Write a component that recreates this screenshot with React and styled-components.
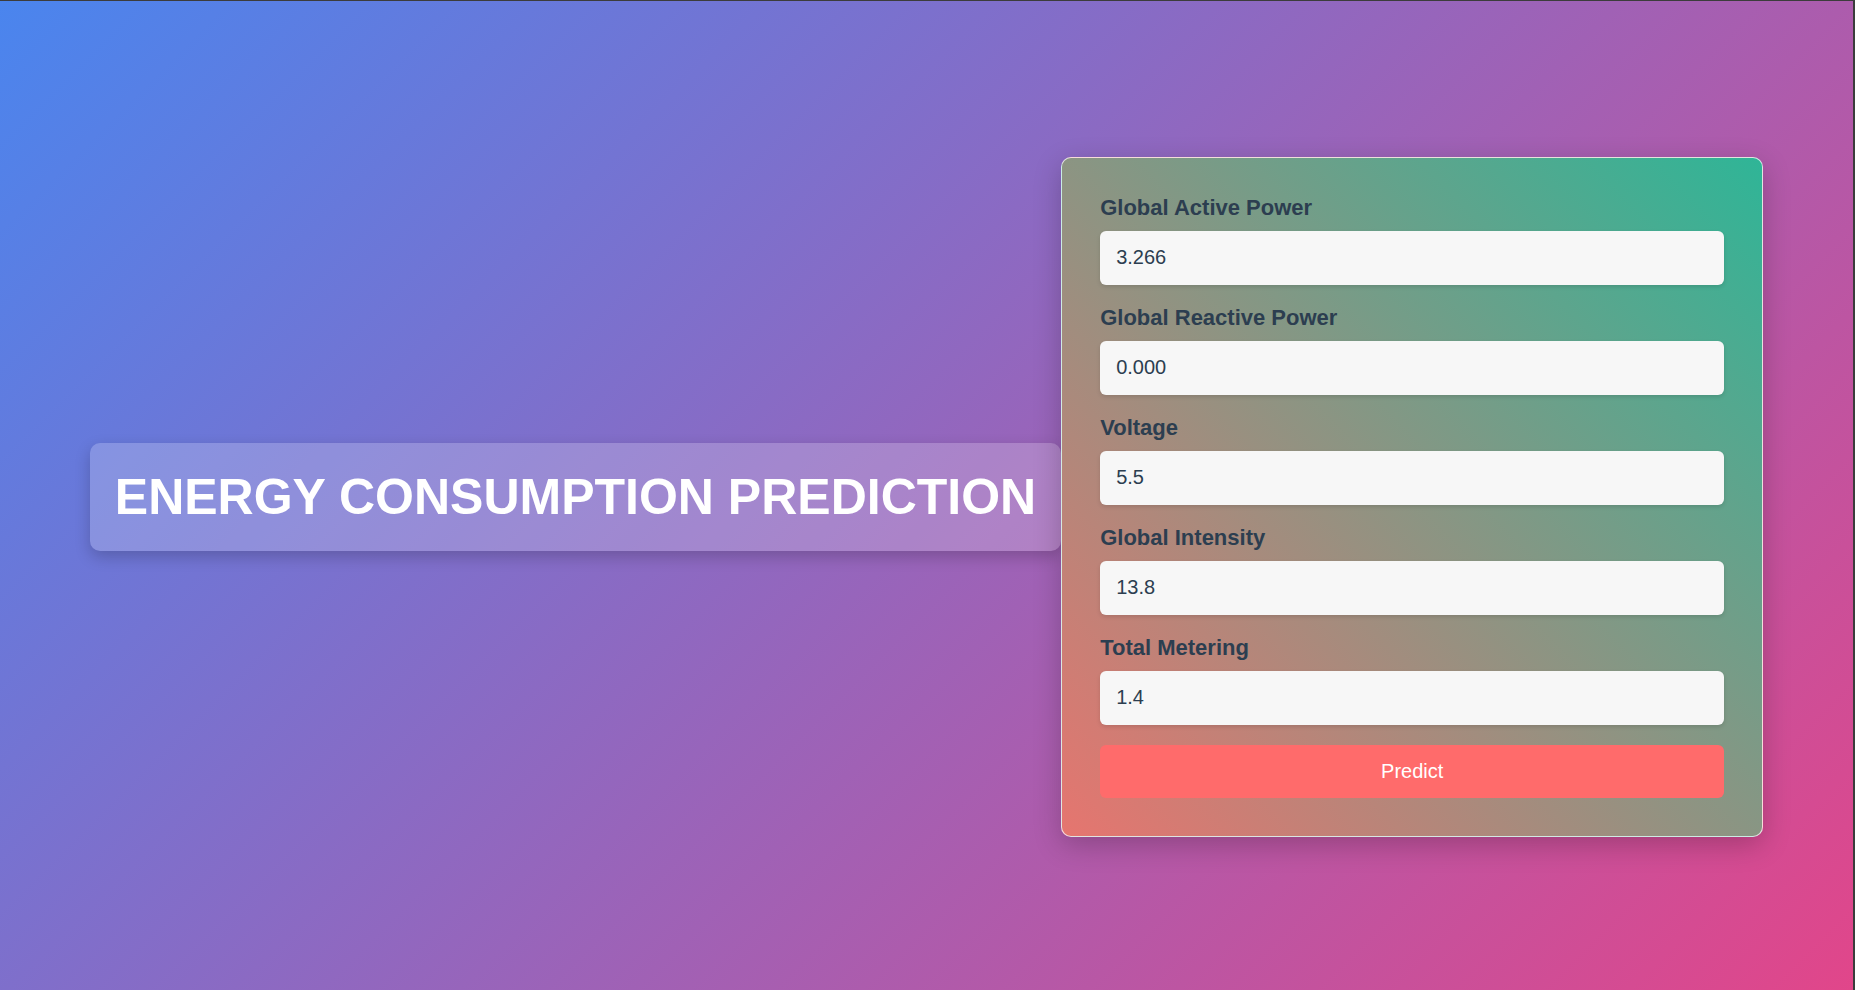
import styled, { createGlobalStyle } from "styled-components";

const GlobalStyle = createGlobalStyle`
  * {
    box-sizing: border-box;
  }
  html, body {
    margin: 0;
    padding: 0;
  }
  body {
    font-family: "Liberation Sans", Arial, sans-serif;
  }
`;

const Page = styled.main`
  min-height: 990px;
  padding-top: 3px;
  display: flex;
  align-items: center;
  justify-content: center;
  background: linear-gradient(135deg, #4a85ee 0%, #e1468a 100%);
  border-top: 1px solid #3c3c3c;
  border-right: 2px solid #3c3c3c;
`;

const TitleBox = styled.div`
  padding: 25px;
  background: rgba(255, 255, 255, 0.2);
  border-radius: 10px;
  box-shadow: 0 6px 16px rgba(0, 0, 0, 0.2);

  > h1 {
    margin: 0;
    font-size: 50px;
    font-weight: bold;
    color: #ffffff;
    white-space: nowrap;
  }
`;

const Card = styled.form`
  width: 702px;
  padding: 37px 38px 38px;
  display: flex;
  flex-direction: column;
  gap: 20px;
  background: linear-gradient(45deg, #e6756f 0%, #2fb597 100%);
  border: 1px solid rgba(255, 255, 255, 0.75);
  border-radius: 10px;
  box-shadow: 0 8px 28px rgba(0, 0, 0, 0.22);
`;

const Field = styled.div`
  display: flex;
  flex-direction: column;
`;

const Label = styled.label`
  font-size: 22px;
  font-weight: bold;
  color: #2c3e50;
  margin-bottom: 9.6px;
`;

const Input = styled.input`
  height: 54.4px;
  padding: 0 15px;
  border: 1px solid transparent;
  border-radius: 6px;
  background: #f7f7f7;
  box-shadow: 0 2px 4px rgba(0, 0, 0, 0.12);
  font-family: "Liberation Sans", Arial, sans-serif;
  font-size: 20px;
  color: #2c3e50;
  outline: none;
`;

const Button = styled.button`
  height: 52.7px;
  border: none;
  border-radius: 6px;
  background: #ff6b6b;
  color: #ffffff;
  font-family: "Liberation Sans", Arial, sans-serif;
  font-size: 20px;
  cursor: pointer;
`;

const fields = [
  { label: "Global Active Power", value: "3.266" },
  { label: "Global Reactive Power", value: "0.000" },
  { label: "Voltage", value: "5.5" },
  { label: "Global Intensity", value: "13.8" },
  { label: "Total Metering", value: "1.4" },
];

const App = () => {
  return (
    <>
      <GlobalStyle />
      <Page>
        <TitleBox>
          <h1>ENERGY CONSUMPTION PREDICTION</h1>
        </TitleBox>
        <Card onSubmit={(e) => e.preventDefault()}>
          {fields.map((f) => (
            <Field key={f.label}>
              <Label>{f.label}</Label>
              <Input type="text" defaultValue={f.value} />
            </Field>
          ))}
          <Button type="submit">Predict</Button>
        </Card>
      </Page>
    </>
  );
};

export default App;
